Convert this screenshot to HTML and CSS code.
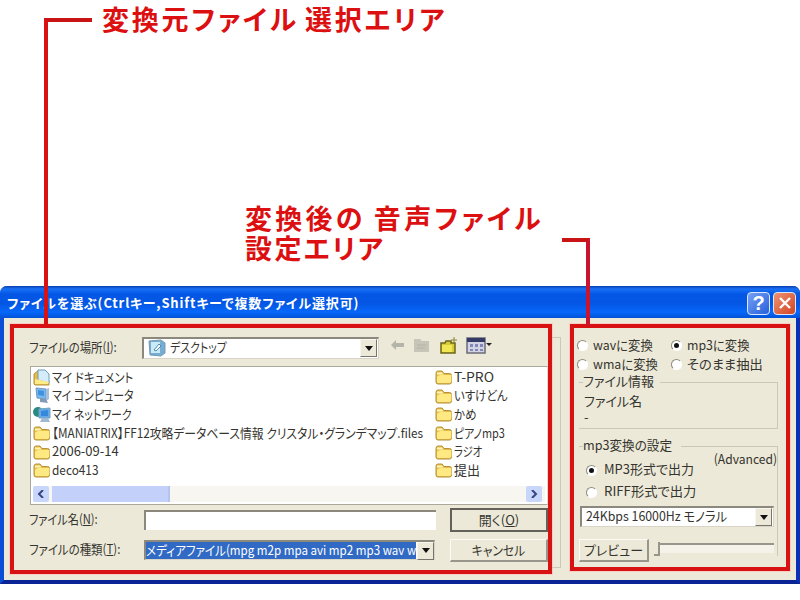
FILE: index.html
```
<!DOCTYPE html>
<html lang="ja">
<head>
    <meta charset="UTF-8">
    <title>ファイルを選ぶ</title>
    <link rel="stylesheet" href="styles.css">
</head>
<body>

    <svg class="defs" width="0" height="0">
        <symbol id="folder" viewBox="0 0 18 16">
            <path d="M1 4.500Q1 2 3 2h4l2 2.500h5.500q2 0 2 2V13q0 2-2 2H3q-2 0-2-2z" fill="#e9bd45" stroke="#b3913d"/>
            <path d="M2 7.500L5 6h11.500v6.500L15 14H3q-1 0-1-1z" fill="#ffe983"/>
            <path d="M2 3.500h5l1.500 2H2z" fill="#fff5b5"/>
        </symbol>
    </svg>

    <div class="callout callout-source">変換元ファイル<span class="gap"></span>選択エリア</div>
    <div class="callout callout-audio">
        <div>変換後の<span class="gap"></span>音声ファイル</div>
        <div class="second">設定エリア</div>
    </div>
    <div class="lead lead-source"></div>
    <div class="lead lead-audio"></div>

    <div class="window">
        <div class="titlebar">
            <span class="title">ファイルを選ぶ(Ctrlキー,Shiftキーで複数ファイル選択可)</span>
            <div class="winbtn help">?</div>
            <div class="winbtn close">
                <svg width="14" height="14" viewBox="0 0 14 14"><path d="M2 2l10 10M12 2L2 12" stroke="#fff" stroke-width="2.400"/></svg>
            </div>
        </div>

        <div class="client">
            <div class="area source">
                <div class="row place">
                    <div class="label"><span class="t-place">ファイルの場所(<u>I</u>):</span></div>
                    <div class="combo">
                        <svg width="18" height="18" viewBox="0 0 18 18"><path d="M1 2l12-1 4 3v10l-4 3-11-1z" fill="#75add3" stroke="#779bb5"/><rect x="3" y="3" width="9" height="11" fill="#cbeaf8"/><path d="M6 11l5-6 2 2-5 5z" fill="#fff" stroke="#4b8bb8"/></svg>
                        <span class="t-desktop">デスクトップ</span>
                        <div class="drop"></div>
                    </div>
                    <div class="tools">
                        <svg width="15" height="14" viewBox="0 0 15 14"><path d="M1 6l5-5v3h8v4H6v3z" fill="#b5b4a8"/></svg>
                        <svg width="18" height="16" viewBox="0 0 18 16"><path d="M1 1h6l2 2h7v11H1z" fill="#c7c5b7"/><path d="M4 7h9M4 10h8" stroke="#b4b2a5"/></svg>
                        <svg width="19" height="18" viewBox="0 0 19 18"><path d="M2 6h4l1-2h5v2h4v10H2z" fill="#d8cc36" stroke="#6d651a" stroke-width="1.500"/><path d="M3 8h10v7H3z" fill="#f1e654"/><path d="M15 0v6M12 3h6" stroke="#8f8633"/></svg>
                        <svg width="27" height="17" viewBox="0 0 27 17"><rect x="1" y="1" width="18" height="15" fill="#d3d3e4" stroke="#6b6b7a" stroke-width="1.500"/><rect x="1" y="1" width="18" height="4" fill="#343b66"/><path d="M4 7h3v3H4zM4 12h3v2H4zM9 7h3v3H9zM9 12h3v2H9zM14 7h3v3h-3zM14 12h3v2h-3z" fill="#8188b7"/><path d="M20 6h6l-3 3z" fill="#222"/></svg>
                    </div>
                </div>

                <div class="list">
                    <div class="files">
                        <div class="column">
                            <div class="file"><svg width="18" height="17" viewBox="0 0 18 17"><path d="M1 5l5-4v8l10 3v4H2l-1-1z" fill="#e6bd45" stroke="#b39345"/><path d="M5 1h7l4 4v9l-11-3z" fill="#d5edfa" stroke="#6c9cb9"/><path d="M2 10l5 1 9 2-1 2H2z" fill="#ffec87"/></svg><span class="t-doc">マイ ドキュメント</span></div>
                            <div class="file"><svg width="18" height="17" viewBox="0 0 18 17"><path d="M3 1l10 1v10l-9-1z" fill="#76baf0" stroke="#7596b9"/><path d="M13 2l3-1v11l-3 2z" fill="#a8bfdc"/><path d="M5 3l6 1v5L5 8z" fill="#3f92e2"/><path d="M7 12h6l2 4-8-1z" fill="#829ab6"/></svg><span class="t-pc">マイ コンピュータ</span></div>
                            <div class="file"><svg width="18" height="17" viewBox="0 0 18 17"><circle cx="5" cy="6" r="5" fill="#278b80"/><path d="M6 3l11-1v10H6z" fill="#66a9e8" stroke="#73a5c4"/><path d="M8 5l7-1v6H8z" fill="#3588db"/><path d="M9 12h6l2 4H7z" fill="#a1b8d3"/></svg><span class="t-net">マイ ネットワーク</span></div>
                            <div class="file"><svg width="18" height="16"><use href="#folder"/></svg><span class="t-map">【MANIATRIX】FF12攻略データベース情報 クリスタル・グランデマップ.files</span></div>
                            <div class="file"><svg width="18" height="16"><use href="#folder"/></svg><span>2006-09-14</span></div>
                            <div class="file"><svg width="18" height="16"><use href="#folder"/></svg><span class="t-deco">deco413</span></div>
                        </div>
                        <div class="column">
                            <div class="file"><svg width="18" height="16"><use href="#folder"/></svg><span class="t-pro">T-PRO</span></div>
                            <div class="file"><svg width="18" height="16"><use href="#folder"/></svg><span class="t-isuke">いすけどん</span></div>
                            <div class="file"><svg width="18" height="16"><use href="#folder"/></svg><span class="t-kame">かめ</span></div>
                            <div class="file"><svg width="18" height="16"><use href="#folder"/></svg><span class="t-piano">ピアノmp3</span></div>
                            <div class="file"><svg width="18" height="16"><use href="#folder"/></svg><span class="t-radio">ラジオ</span></div>
                            <div class="file"><svg width="18" height="16"><use href="#folder"/></svg><span>提出</span></div>
                        </div>
                    </div>
                    <div class="scrollbar">
                        <div class="arrow"><svg width="8" height="8" viewBox="0 0 8 8"><path d="M6 0L2 4l4 4" fill="none" stroke="#35457f" stroke-width="2"/></svg></div>
                        <div class="thumb"></div>
                        <div class="arrow"><svg width="8" height="8" viewBox="0 0 8 8"><path d="M2 0l4 4-4 4" fill="none" stroke="#35457f" stroke-width="2"/></svg></div>
                    </div>
                </div>

                <div class="row name">
                    <div class="label"><span class="t-name">ファイル名(<u>N</u>):</span></div>
                    <div class="input"></div>
                    <div class="button default"><span>開く(<u>O</u>)</span></div>
                </div>
                <div class="row type">
                    <div class="label"><span class="t-type">ファイルの種類(<u>T</u>):</span></div>
                    <div class="combo types">
                        <div class="selected"><span class="t-media">メディアファイル(mpg m2p mpa avi mp2 mp3 wav w</span></div>
                        <div class="drop"></div>
                    </div>
                    <div class="button"><span class="t-cancel">キャンセル</span></div>
                </div>
            </div>

            <div class="frame-edge"></div>

            <div class="area audio">
                <div class="formats">
                    <div class="option"><i class="radio"></i><span class="t-format">wavに変換</span></div>
                    <div class="option"><i class="radio on"></i><span class="t-format">mp3に変換</span></div>
                    <div class="option"><i class="radio"></i><span class="t-format">wmaに変換</span></div>
                    <div class="option"><i class="radio"></i><span class="t-extract">そのまま抽出</span></div>
                </div>
                <div class="group info">
                    <div class="legend"><span>ファイル情報</span></div>
                    <div class="line"><span>ファイル名</span></div>
                    <div class="line">-</div>
                </div>
                <div class="group settings">
                    <div class="legend"><span class="t-settings">mp3変換の設定</span></div>
                    <div class="advanced"><span class="t-adv">(Advanced)</span></div>
                    <div class="option"><i class="radio on"></i><span>MP3形式で出力</span></div>
                    <div class="option"><i class="radio"></i><span class="t-riff">RIFF形式で出力</span></div>
                    <div class="combo bitrate"><span class="t-rate">24Kbps 16000Hz モノラル</span><div class="drop"></div></div>
                    <div class="preview">
                        <div class="button"><span>プレビュー</span></div>
                        <div class="slider"><div class="knob"></div><div class="track"></div></div>
                    </div>
                </div>
            </div>
        </div>
    </div>

</body>
</html>
```
FILE: styles.css
```
* {
    box-sizing: border-box;
}

body {
    margin: 0;
    height: 600px;
    padding-top: 286px;
    overflow: hidden;
    background-color: #fff;
    color: #35342f;
    font-family: "Noto Sans CJK JP", sans-serif;
    font-size: 13px;
    font-feature-settings: "palt";
    line-height: 18px;
}

span {
    display: inline-block;
    white-space: nowrap;
    transform-origin: left center;
}

svg {
    display: block;
    flex: none;
}

.defs {
    position: absolute;
}

/* red notes over the dialog */
.callout {
    position: absolute;
    color: #dc1010;
    font-size: 27px;
    font-weight: 700;
    letter-spacing: 2.8px;
    line-height: 30px;
    white-space: nowrap;
}

.callout-source {
    left: 102px;
    top: 4px;
}

.callout-audio {
    left: 245px;
    top: 203px;
    letter-spacing: 3.3px;
}

.second {
    letter-spacing: 2.4px;
}

.gap {
    width: 6px;
}

.callout-audio .gap {
    width: 8px;
}

.lead {
    position: absolute;
    border-top: 4px solid #c81414;
    z-index: 2;
}

.lead-source {
    left: 44px;
    top: 18px;
    width: 48px;
    height: 308px;
    border-left: 4px solid #d81212;
}

.lead-audio {
    left: 562px;
    top: 238px;
    width: 28px;
    height: 88px;
    border-right: 4px solid #c8142c;
}

.window {
    width: 800px;
    height: 298px;
    display: flex;
    flex-direction: column;
    background-color: #ece9d8;
    border: 4px solid #0b4fd8;
    border-top: none;
    border-right-color: #0a2fb8;
    border-bottom-color: #0a2496;
    border-radius: 7px 7px 0 0;
}

.titlebar {
    height: 32px;
    margin: 0 -4px;
    padding: 2px 4px 0 7px;
    display: flex;
    align-items: center;
    gap: 3px;
    background: linear-gradient(#0a3fae 0, #1970f5 3px, #0457e6 8px, #0455e2 17px, #0668fb 26px, #0352d6 32px);
    border-radius: 7px 7px 0 0;
    color: #fff;
}

.title {
    flex: 1;
    font-weight: 700;
    letter-spacing: 0.86px;
}

.winbtn {
    width: 23px;
    height: 23px;
    display: flex;
    align-items: center;
    justify-content: center;
    border: 1px solid #dce8fb;
    border-radius: 4px;
    background: linear-gradient(135deg, #75a0f5, #2660dc);
    font: bold 20px "Liberation Sans", sans-serif;
}

.close {
    background: linear-gradient(135deg, #ee9373, #d24523);
}

.client {
    flex: 1;
    display: flex;
    align-items: flex-start;
    padding: 6px 0 0 6px;
}

.area {
    border: 4px solid #d81212;
    outline: 1px solid #f8cfc2;
}

.source {
    width: 542px;
    height: 250px;
    padding: 8px 0 0 15px;
}

.frame-edge {
    width: 9px;
    height: 231px;
    margin: 13px 9px 0 0;
    border: 1px solid #cbc8b8;
    border-left: none;
}

.audio {
    width: 220px;
    height: 247px;
    padding: 8px 8px 0 3px;
}

.row {
    display: flex;
    align-items: center;
}

.label {
    width: 115px;
    padding-bottom: 2px;
}

.place {
    height: 23px;
}

.place .label {
    width: 113px;
}

.combo {
    display: flex;
    align-items: center;
    width: 237px;
    height: 22px;
    padding: 0 1px 0 4px;
    gap: 4px;
    background-color: #fff;
    border: 1px solid #d8d5c6;
    border-top: 2px solid #8b897e;
    border-left: 2px solid #8b897e;
}

.combo > span {
    margin-bottom: 2px;
}

.drop {
    flex: none;
    width: 17px;
    height: 18px;
    margin-left: auto;
    display: flex;
    align-items: center;
    justify-content: center;
    background-color: #ece9d8;
    border: 1px solid #f8f7ef;
    border-right-color: #77756b;
    border-bottom-color: #77756b;
}

.drop::after {
    content: "";
    border: 4px solid transparent;
    border-top: 5px solid #111;
    border-bottom: none;
}

.tools {
    display: flex;
    align-items: center;
    gap: 8px;
    padding: 0 0 4px 11px;
}

.list {
    width: 518px;
    height: 139px;
    margin: 7px 0 0 1px;
    padding: 1px 2px;
    background-color: #fff;
    border: 1px solid #aaa89a;
    border-right-color: #dedbcc;
}

.files {
    display: flex;
    height: 118px;
}

.column:first-child {
    width: 402px;
}

.file {
    display: flex;
    align-items: center;
    height: 18.6px;
    gap: 1px;
}

.file span {
    margin-bottom: 1px;
}

.scrollbar {
    display: flex;
    height: 16px;
    padding-right: 3px;
    background-color: #f7f6f1;
}

.arrow {
    width: 16px;
    display: flex;
    align-items: center;
    justify-content: center;
    background-color: #c8d6fb;
    border-radius: 2px;
}

.thumb {
    width: 118px;
    margin: 0 auto 0 3px;
    background-color: #c3d0fa;
    border-right: 2px solid #b5c3ee;
}

.name {
    height: 24px;
    margin-top: 3px;
}

.input {
    width: 292px;
    height: 20px;
    background-color: #fff;
    border-top: 2px solid #8b897e;
    border-left: 2px solid #8b897e;
}

.button {
    display: flex;
    align-items: center;
    justify-content: center;
    width: 98px;
    height: 23px;
    background-color: #ece9d8;
    border: 1px solid #fbfaf4;
    border-right: 2px solid #98968a;
    border-bottom: 2px solid #98968a;
}

.source .button {
    margin-left: 14px;
}

.default {
    height: 24px;
    border: 2px solid #62615a;
}

.type {
    height: 24px;
    margin-top: 6px;
}

.types {
    width: 291px;
    height: 20px;
    padding: 0;
    gap: 0;
    margin-right: 1px;
}

.selected {
    width: 270px;
    height: 17px;
    overflow: hidden;
    background-color: #316ac5;
    color: #fff;
    line-height: 16px;
}

.formats {
    display: grid;
    grid-template-columns: 94px 1fr;
    grid-auto-rows: 19px;
}

.option {
    display: flex;
    align-items: center;
    gap: 5px;
}

.option span {
    margin-bottom: 2px;
}

.radio {
    flex: none;
    width: 11px;
    height: 11px;
    display: flex;
    align-items: center;
    justify-content: center;
    background-color: #fff;
    border: 1px solid #fff;
    border-top-color: #8d8b80;
    border-left-color: #8d8b80;
    border-radius: 50%;
}

.on::after {
    content: "";
    width: 5px;
    height: 5px;
    background-color: #111;
    border-radius: 50%;
}

.group {
    border: 1px solid #cbc8b8;
    border-left: none;
    margin-left: 2px;
}

.legend {
    width: max-content;
    height: 18px;
    margin: -11px 0 0 4px;
    padding-right: 6px;
    background-color: #ece9d8;
}

.info {
    height: 47px;
    margin-top: 8px;
}

.line {
    height: 16px;
    padding-left: 5px;
}

.info .line:nth-child(2) {
    margin-top: 2px;
}

.settings {
    height: 110px;
    margin-top: 17px;
    border-bottom: none;
}

.advanced {
    display: flex;
    justify-content: flex-end;
    height: 9px;
    line-height: 10px;
}

.settings .option {
    height: 22px;
    padding-left: 7px;
    gap: 7px;
}

.settings .option:nth-child(3) {
    margin-top: -4px;
}

.bitrate {
    width: 194px;
    height: 21px;
    margin: 3px 0 0 1px;
}

.preview {
    display: flex;
    margin-top: 12px;
}

.preview .button {
    width: 70px;
}

.slider {
    display: flex;
    margin-left: 5px;
}

.knob {
    width: 6px;
    height: 14px;
    margin-top: 3px;
    border-right: 2px solid #98968a;
    border-bottom: 2px solid #98968a;
}

.track {
    width: 114px;
    height: 10px;
    margin-top: 4px;
    border-top: 2px solid #98968a;
    background-color: #f5f3e9;
}

/* narrow UI lettering */
.t-place, .t-doc, .t-isuke, .t-kame, .t-type {
    transform: scaleX(0.88);
}

.t-desktop, .t-pc, .t-net, .t-piano {
    transform: scaleX(0.84);
}

.t-name {
    transform: scaleX(0.86);
}

.t-map {
    transform: scaleX(0.907);
}

.t-media {
    transform: scaleX(0.89);
}

.t-deco, .t-cancel {
    transform: scaleX(0.91);
}

.t-cancel {
    transform-origin: center;
}

.t-pro {
    transform: scaleX(1.07);
}

.t-radio {
    transform: scaleX(0.79);
}

.t-format, .t-rate {
    transform: scaleX(0.95);
}

.t-extract, .t-riff {
    transform: scaleX(1.02);
}

.t-settings {
    transform: scaleX(0.97);
}

.t-adv {
    transform: scaleX(0.93);
    transform-origin: right center;
}
```
